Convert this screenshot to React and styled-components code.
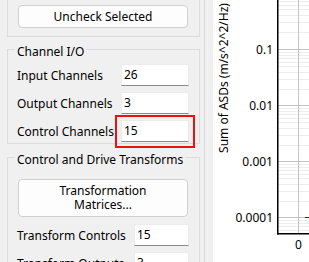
import React from "react";
import styled, { createGlobalStyle } from "styled-components";

const GlobalStyle = createGlobalStyle`
  html, body {
    margin: 0;
    padding: 0;
    overflow: hidden;
    background: #f0f0f0;
  }
  * {
    box-sizing: border-box;
  }
`;

const Window = styled.div`
  width: 309px;
  height: 262px;
  display: flex;
  background: #f0f0f0;
  font-family: "Noto Sans", "Open Sans", sans-serif;
  font-size: 12px;
  color: #000;
  overflow: hidden;
`;

const SidePanel = styled.div`
  width: 205px;
  flex-shrink: 0;
  border-right: 1px solid #d9d9d9;
  padding-left: 7px;
  display: flex;
  flex-direction: column;
  overflow: hidden;
`;

const Group = styled.div`
  width: 193px;
  flex-shrink: 0;
  border: 1px solid #dcdcdc;
  border-top: ${(props) => (props.$clipped ? "none" : "1px solid #dcdcdc")};
  margin-top: ${(props) => props.$top || 0}px;
  padding: 0 0 1px 9px;
  height: ${(props) => (props.$height ? props.$height + "px" : "auto")};
`;

const Legend = styled.div`
  width: fit-content;
  line-height: 16px;
  height: 16px;
  margin: -6px 0 0 -2px;
  padding: 0 2px;
  background: #f0f0f0;
  white-space: nowrap;
`;

const Button = styled.button`
  display: block;
  width: 170px;
  height: ${(props) => props.$height || 23}px;
  margin: ${(props) => props.$top || 0}px 0 0 1px;
  padding: 0;
  background: #fdfdfd;
  border: 1px solid #d0d0d0;
  border-radius: 4px;
  font-family: inherit;
  font-size: 12px;
  line-height: 14px;
  color: #000;
  text-align: center;
`;

const Rows = styled.div`
  display: flex;
  flex-direction: column;
  gap: 6px;
  margin-top: ${(props) => props.$top || 0}px;
`;

const Row = styled.div`
  display: flex;
  align-items: center;
  height: 22px;
`;

const Label = styled.div`
  width: ${(props) => props.$width}px;
  flex-shrink: 0;
  white-space: nowrap;
`;

const Field = styled.div`
  position: relative;
  width: ${(props) => props.$width}px;
  height: 22px;
  background: #fff;
  border: 1px solid #ececec;
  border-bottom: 1px solid #8a8a8a;
  padding-left: 2px;
  line-height: 20px;
`;

const Highlight = styled.div`
  position: absolute;
  top: -6px;
  left: -7px;
  right: -7px;
  bottom: -7px;
  border: 2px solid #ee1111;
  pointer-events: none;
`;

const Splitter = styled.div`
  width: 8px;
  flex-shrink: 0;
`;

const PlotPanel = styled.div`
  flex: 1;
  background: #fff;
  overflow: hidden;
`;

const Chart = styled.svg`
  display: block;
  font-family: "Noto Sans", "Open Sans", sans-serif;
  font-size: 12px;
`;

const decades = [
  { label: "0.1", y: 49.5 },
  { label: "0.01", y: 105.5 },
  { label: "0.001", y: 161.5 },
  { label: "0.0001", y: 217.5 },
];

const minorLines = [];
[-7.5, 49.5, 105.5, 161.5].forEach((top) => {
  for (let k = 2; k <= 9; k++) {
    minorLines.push(Math.round(top + 56 * (1 - Math.log10(k))) + 0.5);
  }
});
for (let k = 9; k >= 5; k--) {
  const y = 217.5 + 56 * (1 - Math.log10(k));
  if (y < 233) minorLines.push(Math.round(y) + 0.5);
}

const AsdChart = () => (
  <Chart width="96" height="262" viewBox="0 0 96 262">
    {minorLines.map((y, i) => (
      <line key={i} x1="65" x2="96" y1={y} y2={y} stroke="#ededed" strokeWidth="1" />
    ))}
    {decades.map((d) => (
      <g key={d.label}>
        <line x1="65" x2="96" y1={d.y} y2={d.y} stroke="#c4c4c4" strokeWidth="1" />
        <text x="60" y={d.y + 4.5} textAnchor="end" fill="#000">
          {d.label}
        </text>
      </g>
    ))}
    <line x1="85.5" x2="85.5" y1="0" y2="233" stroke="#c4c4c4" strokeWidth="1" />
    <line x1="92" x2="96" y1="217.5" y2="217.5" stroke="#1a1ad0" strokeWidth="1" />
    <rect x="64" y="0" width="1.5" height="234.5" fill="#000" />
    <rect x="64" y="233" width="32" height="1.5" fill="#000" />
    <text x="85.5" y="248.5" textAnchor="middle" fill="#000">
      0
    </text>
    <text x="15" y="78" textAnchor="middle" fill="#000" transform="rotate(-90 15 78)">
      Sum of ASDs (m/s^2^2/Hz)
    </text>
  </Chart>
);

const App = () => {
  return (
    <>
      <GlobalStyle />
      <Window>
        <SidePanel>
          <Group $clipped $height={37}>
            <Button $top={5}>Uncheck Selected</Button>
          </Group>

          <Group $top={12}>
            <Legend>Channel I/O</Legend>
            <Rows $top={4}>
              <Row>
                <Label $width={104}>Input Channels</Label>
                <Field $width={68}>26</Field>
              </Row>
              <Row>
                <Label $width={104}>Output Channels</Label>
                <Field $width={68}>3</Field>
              </Row>
              <Row>
                <Label $width={104}>Control Channels</Label>
                <Field $width={68}>
                  15
                  <Highlight />
                </Field>
              </Row>
            </Rows>
          </Group>

          <Group $top={13}>
            <Legend>Control and Drive Transforms</Legend>
            <Button $top={11} $height={38}>
              Transformation
              <br />
              Matrices...
            </Button>
            <Rows $top={7}>
              <Row>
                <Label $width={117}>Transform Controls</Label>
                <Field $width={55}>15</Field>
              </Row>
              <Row>
                <Label $width={117}>Transform Outputs</Label>
                <Field $width={55}>3</Field>
              </Row>
            </Rows>
          </Group>
        </SidePanel>
        <Splitter />
        <PlotPanel>
          <AsdChart />
        </PlotPanel>
      </Window>
    </>
  );
};

export default App;
